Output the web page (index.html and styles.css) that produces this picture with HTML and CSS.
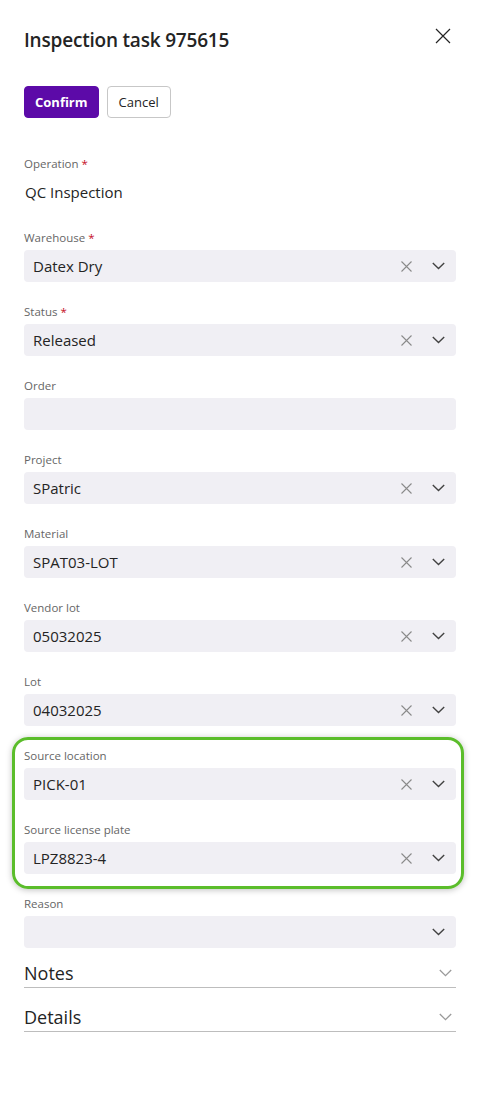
FILE: index.html
```html
<!DOCTYPE html>
<html lang="en">
<head>
    <meta charset="UTF-8">
    <meta name="viewport" content="width=device-width, initial-scale=1.0">
    <title>Inspection task 975615</title>
    <link rel="stylesheet" href="styles.css">
</head>
<body>
    <div class="panel">
        <div class="header">
            <h1>Inspection task 975615</h1>
            <button class="close" aria-label="Close">
                <svg width="16" height="16" viewBox="0 0 16 16"><path d="M1 1 L15 15 M15 1 L1 15" stroke="#242424" stroke-width="1.2" fill="none"/></svg>
            </button>
        </div>

        <div class="actions">
            <button class="btn primary">Confirm</button>
            <button class="btn">Cancel</button>
        </div>

        <div class="field">
            <label>Operation <span class="req">*</span></label>
            <div class="static">QC Inspection</div>
        </div>

        <div class="field">
            <label>Warehouse <span class="req">*</span></label>
            <div class="select">
                <span class="value">Datex Dry</span>
                <span class="clear"><svg width="11" height="11" viewBox="0 0 11 11"><path d="M0.5 0.5 L10.5 10.5 M10.5 0.5 L0.5 10.5" stroke="#8a8a8a" stroke-width="1.1" fill="none"/></svg></span>
                <span class="chev"><svg width="13" height="8" viewBox="0 0 13 8"><path d="M0.8 1 L6.5 6.6 L12.2 1" stroke="#424242" stroke-width="1.4" fill="none"/></svg></span>
            </div>
        </div>

        <div class="field">
            <label>Status <span class="req">*</span></label>
            <div class="select">
                <span class="value">Released</span>
                <span class="clear"><svg width="11" height="11" viewBox="0 0 11 11"><path d="M0.5 0.5 L10.5 10.5 M10.5 0.5 L0.5 10.5" stroke="#8a8a8a" stroke-width="1.1" fill="none"/></svg></span>
                <span class="chev"><svg width="13" height="8" viewBox="0 0 13 8"><path d="M0.8 1 L6.5 6.6 L12.2 1" stroke="#424242" stroke-width="1.4" fill="none"/></svg></span>
            </div>
        </div>

        <div class="field">
            <label>Order</label>
            <div class="select"></div>
        </div>

        <div class="field">
            <label>Project</label>
            <div class="select">
                <span class="value">SPatric</span>
                <span class="clear"><svg width="11" height="11" viewBox="0 0 11 11"><path d="M0.5 0.5 L10.5 10.5 M10.5 0.5 L0.5 10.5" stroke="#8a8a8a" stroke-width="1.1" fill="none"/></svg></span>
                <span class="chev"><svg width="13" height="8" viewBox="0 0 13 8"><path d="M0.8 1 L6.5 6.6 L12.2 1" stroke="#424242" stroke-width="1.4" fill="none"/></svg></span>
            </div>
        </div>

        <div class="field">
            <label>Material</label>
            <div class="select">
                <span class="value">SPAT03-LOT</span>
                <span class="clear"><svg width="11" height="11" viewBox="0 0 11 11"><path d="M0.5 0.5 L10.5 10.5 M10.5 0.5 L0.5 10.5" stroke="#8a8a8a" stroke-width="1.1" fill="none"/></svg></span>
                <span class="chev"><svg width="13" height="8" viewBox="0 0 13 8"><path d="M0.8 1 L6.5 6.6 L12.2 1" stroke="#424242" stroke-width="1.4" fill="none"/></svg></span>
            </div>
        </div>

        <div class="field">
            <label>Vendor lot</label>
            <div class="select">
                <span class="value">05032025</span>
                <span class="clear"><svg width="11" height="11" viewBox="0 0 11 11"><path d="M0.5 0.5 L10.5 10.5 M10.5 0.5 L0.5 10.5" stroke="#8a8a8a" stroke-width="1.1" fill="none"/></svg></span>
                <span class="chev"><svg width="13" height="8" viewBox="0 0 13 8"><path d="M0.8 1 L6.5 6.6 L12.2 1" stroke="#424242" stroke-width="1.4" fill="none"/></svg></span>
            </div>
        </div>

        <div class="field">
            <label>Lot</label>
            <div class="select">
                <span class="value">04032025</span>
                <span class="clear"><svg width="11" height="11" viewBox="0 0 11 11"><path d="M0.5 0.5 L10.5 10.5 M10.5 0.5 L0.5 10.5" stroke="#8a8a8a" stroke-width="1.1" fill="none"/></svg></span>
                <span class="chev"><svg width="13" height="8" viewBox="0 0 13 8"><path d="M0.8 1 L6.5 6.6 L12.2 1" stroke="#424242" stroke-width="1.4" fill="none"/></svg></span>
            </div>
        </div>

        <!-- highlighted group -->
        <div class="highlight">
            <div class="field">
                <label>Source location</label>
                <div class="select">
                    <span class="value">PICK-01</span>
                    <span class="clear"><svg width="11" height="11" viewBox="0 0 11 11"><path d="M0.5 0.5 L10.5 10.5 M10.5 0.5 L0.5 10.5" stroke="#8a8a8a" stroke-width="1.1" fill="none"/></svg></span>
                    <span class="chev"><svg width="13" height="8" viewBox="0 0 13 8"><path d="M0.8 1 L6.5 6.6 L12.2 1" stroke="#424242" stroke-width="1.4" fill="none"/></svg></span>
                </div>
            </div>

            <div class="field">
                <label>Source license plate</label>
                <div class="select">
                    <span class="value">LPZ8823-4</span>
                    <span class="clear"><svg width="11" height="11" viewBox="0 0 11 11"><path d="M0.5 0.5 L10.5 10.5 M10.5 0.5 L0.5 10.5" stroke="#8a8a8a" stroke-width="1.1" fill="none"/></svg></span>
                    <span class="chev"><svg width="13" height="8" viewBox="0 0 13 8"><path d="M0.8 1 L6.5 6.6 L12.2 1" stroke="#424242" stroke-width="1.4" fill="none"/></svg></span>
                </div>
            </div>
        </div>

        <div class="field last">
            <label>Reason</label>
            <div class="select">
                <span class="value"></span>
                <span class="chev"><svg width="13" height="8" viewBox="0 0 13 8"><path d="M0.8 1 L6.5 6.6 L12.2 1" stroke="#424242" stroke-width="1.4" fill="none"/></svg></span>
            </div>
        </div>

        <div class="sections">
            <div class="section">
                <span>Notes</span>
                <svg width="13" height="8" viewBox="0 0 13 8"><path d="M0.8 1 L6.5 6.6 L12.2 1" stroke="#9a9a9a" stroke-width="1.3" fill="none"/></svg>
            </div>
            <div class="section">
                <span>Details</span>
                <svg width="13" height="8" viewBox="0 0 13 8"><path d="M0.8 1 L6.5 6.6 L12.2 1" stroke="#9a9a9a" stroke-width="1.3" fill="none"/></svg>
            </div>
        </div>
    </div>
</body>
</html>
```

FILE: styles.css
```css
body {
    margin: 0;
    font-family: "Open Sans", "Noto Sans", sans-serif;
    background-color: #fff;
    color: #242424;
}
.panel {
    padding: 26px 24px 0 24px;
}
.header {
    display: flex;
    justify-content: space-between;
    align-items: center;
    height: 28px;
}
h1 {
    margin: 0;
    font-size: 19px;
    font-weight: 600;
    color: #242424;
    letter-spacing: -0.2px;
}
.close {
    border: none;
    background: none;
    padding: 0;
    margin: -9px 5px 0 0;
    width: 16px;
    height: 16px;
    display: flex;
    cursor: pointer;
}
.actions {
    display: flex;
    gap: 8px;
    margin-top: 32px;
    margin-bottom: 36px;
}
.btn {
    height: 32px;
    padding: 0 11px;
    border: 1px solid #c7c7c7;
    border-radius: 4px;
    background: #fff;
    font-family: inherit;
    font-size: 13px;
    color: #242424;
    cursor: pointer;
}
.btn.primary {
    padding: 0 10px;
    background-color: #5c0aa8;
    border-color: #5c0aa8;
    color: #fff;
    font-weight: 700;
}
.field {
    margin-bottom: 20px;
}
.field.last {
    margin-bottom: 0;
}
.field label {
    display: block;
    height: 18px;
    line-height: 20px;
    font-size: 11.5px;
    color: #666;
    margin-bottom: 4px;
}
.req {
    color: #c50f1f;
}
.static {
    height: 32px;
    line-height: 32px;
    font-size: 15px;
    padding-left: 1px;
    color: #242424;
}
.select {
    display: flex;
    align-items: center;
    height: 32px;
    background-color: #f0eff4;
    border-radius: 4px;
    padding: 0 11px 0 9px;
}
.value {
    flex: 1;
    font-size: 15px;
    color: #242424;
}
.clear {
    display: flex;
    margin-right: 20px;
}
.chev {
    display: flex;
}
.highlight {
    position: relative;
}
.highlight::after {
    content: "";
    position: absolute;
    top: -9px;
    left: -12px;
    right: -8px;
    bottom: -15px;
    border: 3px solid #5bbd2b;
    border-radius: 16px;
    box-shadow: 0 1px 6px rgba(0, 0, 0, 0.25);
    pointer-events: none;
}
.sections {
    margin-top: 13px;
}
.section {
    display: flex;
    justify-content: space-between;
    align-items: center;
    height: 24px;
    padding-bottom: 2px;
    border-bottom: 1px solid #bdbdbd;
    font-size: 18px;
    color: #242424;
}
.section + .section {
    margin-top: 17px;
}
.section svg {
    margin-right: 4px;
}
```
